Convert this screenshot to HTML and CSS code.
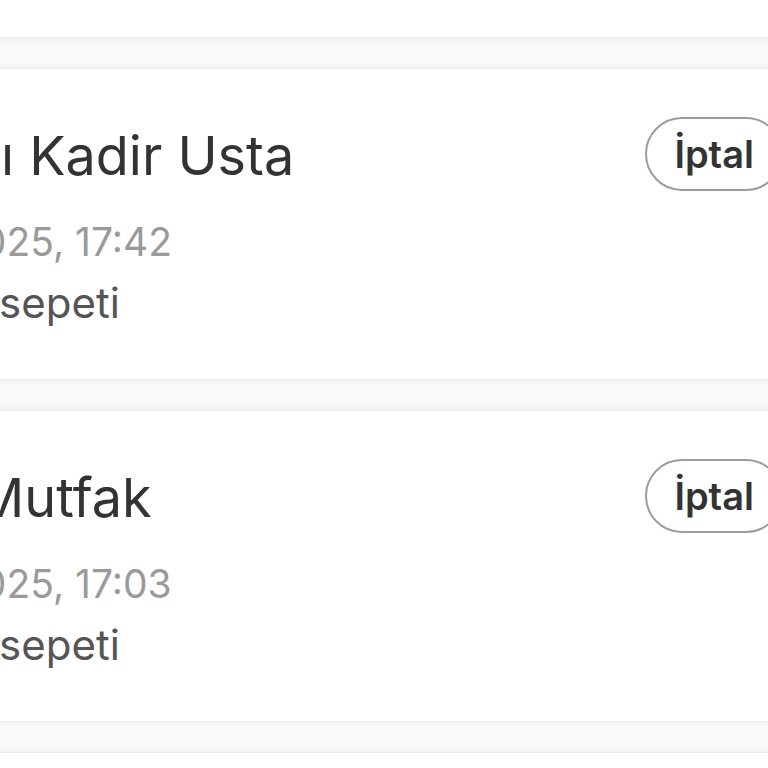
FILE: index.html
```html
<!DOCTYPE html>
<html lang="tr">
<head>
    <meta charset="UTF-8">
    <meta name="viewport" content="width=device-width, initial-scale=1.0">
    <title>Siparişler</title>
    <link rel="stylesheet" href="styles.css">
</head>
<body>
    <div class="orders">
        <!-- previous order, scrolled away -->
        <div class="order">
            <div class="info">
                <h2 class="shop">Lezzet Durağı</h2>
                <p class="date">2.03.2025, 18:10</p>
                <p class="platform">Yemeksepeti</p>
            </div>
            <div class="side">
                <button class="cancel">İptal</button>
                <svg class="chev" viewBox="0 0 16 16" width="16" height="16"><path d="M5 2l6 6-6 6" fill="none" stroke="currentColor" stroke-width="2"/></svg>
            </div>
        </div>
        <div class="order">
            <div class="info">
                <h2 class="shop">Tatlıcı Kadir Usta</h2>
                <p class="date">2.03.2025, 17:42</p>
                <p class="platform">Yemeksepeti</p>
            </div>
            <div class="side">
                <button class="cancel">İptal</button>
                <svg class="chev" viewBox="0 0 16 16" width="16" height="16"><path d="M5 2l6 6-6 6" fill="none" stroke="currentColor" stroke-width="2"/></svg>
            </div>
        </div>
        <div class="order">
            <div class="info">
                <h2 class="shop">Aşk Mutfak</h2>
                <p class="date">2.03.2025, 17:03</p>
                <p class="platform">Yemeksepeti</p>
            </div>
            <div class="side">
                <button class="cancel">İptal</button>
                <svg class="chev" viewBox="0 0 16 16" width="16" height="16"><path d="M5 2l6 6-6 6" fill="none" stroke="currentColor" stroke-width="2"/></svg>
            </div>
        </div>
        <div class="order">
            <div class="info">
                <h2 class="shop">Pideci Mehmet</h2>
                <p class="date">2.03.2025, 16:20</p>
                <p class="platform">Yemeksepeti</p>
            </div>
            <div class="side">
                <button class="cancel">İptal</button>
            </div>
        </div>
    </div>
</body>
</html>
```

FILE: styles.css
```css
*,::after,::before{margin: 0; box-sizing: border-box;}
html,body{height: 100%; overflow: hidden;}
body{font-family: Inter, "Noto Sans", sans-serif; background: #f9f9f9; color: #333;}
.orders{display: flex; flex-direction: column; gap: 30px; margin: -274px -60px 0 -160px;}
.order{height: 312px; display: flex; justify-content: space-between; background: #fff; border: 1px solid #ececec; box-shadow: 0 0 7px rgba(0,0,0,.06); padding: 56px 44px 0 24px;}
.shop{font-size: 54px; line-height: 62px; font-weight: 400; color: #333; white-space: nowrap;}
.date{font-size: 39px; line-height: 44px; margin-top: 33px; color: #9a9a9a; white-space: nowrap;}
.platform{font-size: 42px; line-height: 50px; margin-top: 14px; color: #555; white-space: nowrap;}
.side{display: flex; flex-direction: column; align-items: flex-end;}
.cancel{height: 74px; margin-top: -8px; padding: 0 27px; border: 2px solid #9c9c9c; border-radius: 37px; background: #fff; font-family: inherit; font-size: 38px; font-weight: 600; color: #333;}
.chev{margin: 92px -8px 0 0; color: #f1f1f1;}
```
